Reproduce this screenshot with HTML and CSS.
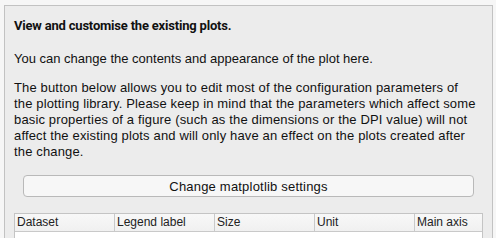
FILE: index.html
```html
<!DOCTYPE html>
<html>

<head>
    <title>Plot settings</title>
    <link rel="stylesheet" href="styles.css">
</head>

<body>
    <div class="panel">
        <p class="title">View and customise the existing plots.</p>
        <p class="intro">You can change the contents and appearance of the plot here.</p>
        <p class="info">The button below allows you to edit most of the configuration parameters of<br>
            the plotting library. Please keep in mind that the parameters which affect some<br>
            basic properties of a figure (such as the dimensions or the DPI value) will not<br>
            affect the existing plots and will only have an effect on the plots created after<br>
            the change.</p>
        <div class="button-row">
            <button class="settings-btn">Change matplotlib settings</button>
        </div>
        <div class="plots-table">
            <div class="table-head">
                <div class="col">Dataset</div>
                <div class="col">Legend label</div>
                <div class="col">Size</div>
                <div class="col">Unit</div>
                <div class="col last">Main axis</div>
            </div>
            <div class="table-body"></div>
        </div>
    </div>
</body>

</html>
```

FILE: styles.css
```css
* {
    margin: 0;
    padding: 0;
    box-sizing: border-box;
}

html,
body {
    height: 100%;
}

body {
    background-color: #f6f6f6;
    font: 13px "Liberation Sans", Arial, sans-serif;
    color: #111;
    overflow: hidden;
    padding-top: 5px;
}

.panel {
    margin: 0 3px 0 4px;
    height: 100%;
    overflow: hidden;
    border: 1px solid #c2c2c2;
    border-bottom: none;
    background-color: #ececec;
    padding: 11px 9px 0 9px;
    line-height: 17px;
}

.title {
    font-family: Roboto, "Liberation Sans", sans-serif;
    font-weight: bold;
    letter-spacing: -0.2px;
}

.intro {
    margin-top: 16px;
}

.info {
    margin-top: 13px;
    line-height: 16px;
    white-space: nowrap;
    letter-spacing: 0.15px;
}

.button-row {
    padding: 15px 9px 0 9px;
}

.settings-btn {
    display: block;
    width: 100%;
    height: 22px;
    font: 13px "Liberation Sans", Arial, sans-serif;
    letter-spacing: 0.2px;
    color: #111;
    background-color: #f7f7f7;
    border: 1px solid #b9b9b9;
    border-radius: 4px;
}

.plots-table {
    margin-top: 16px;
    border: 1px solid #c4c4c4;
    background-color: #fff;
    height: 40px;
}

.table-head {
    display: flex;
    height: 18px;
    background: linear-gradient(#f8f8f8, #f0f0f0);
    border-bottom: 1px solid #c9c9c9;
    font-size: 12px;
    line-height: 17px;
    color: #222;
}

.col {
    width: 100px;
    padding-left: 2px;
    border-right: 1px solid #c9c9c9;
}

.col.last {
    flex: 1;
    border-right: none;
}
```
